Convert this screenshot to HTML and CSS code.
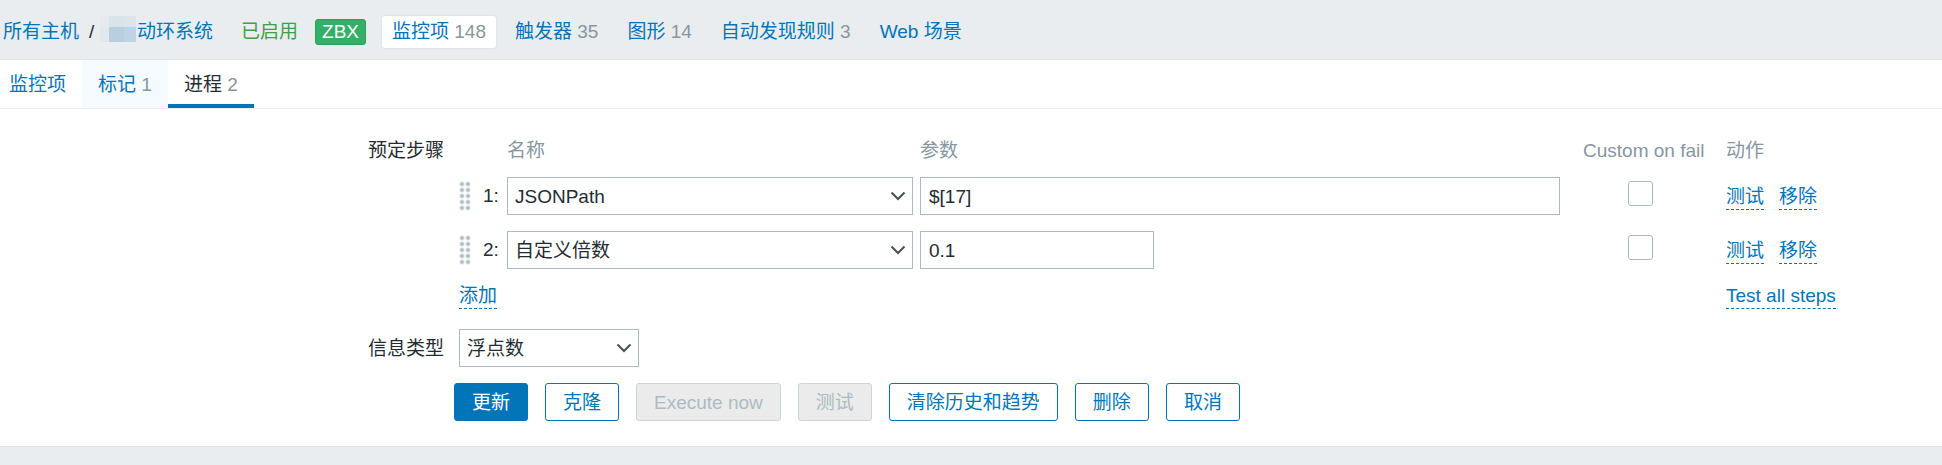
FILE: index.html
```html
<!DOCTYPE html>
<html lang="zh-CN">

<head>
    <meta charset="UTF-8">
    <meta name="viewport" content="width=device-width, initial-scale=1.0">
    <title>监控项</title>
    <link rel="stylesheet" href="styles.css">
</head>

<body>
    <nav class="host-nav">
        <div class="breadcrumbs">
            <a href="#">所有主机</a>
            <span>/</span>
            <a href="#" class="host-name">
                <svg width="37" height="26" viewBox="0 0 37 26" shape-rendering="crispEdges" aria-hidden="true">
                    <rect width="9" height="11" fill="#e6eaee" />
                    <rect x="9" width="15" height="11" fill="#d9e3ea" />
                    <rect x="24" width="12" height="11" fill="#dce5eb" />
                    <rect y="11" width="9" height="15" fill="#e1e8ed" />
                    <rect x="9" y="11" width="15" height="15" fill="#b6d0e2" />
                    <rect x="24" y="11" width="12" height="15" fill="#bed4e3" />
                </svg>动环系统</a>
        </div>
        <span class="status">已启用</span>
        <span class="badge">ZBX</span>
        <div class="host-links">
            <a href="#" class="selected">监控项 <sup>148</sup></a>
            <a href="#">触发器 <sup>35</sup></a>
            <a href="#">图形 <sup>14</sup></a>
            <a href="#">自动发现规则 <sup>3</sup></a>
            <a href="#">Web 场景</a>
        </div>
    </nav>

    <main>
        <div class="tabs">
            <a href="#">监控项</a>
            <a href="#" class="hover">标记 <sup>1</sup></a>
            <a href="#" class="active">进程 <sup>2</sup></a>
        </div>

        <form class="item-form">
            <div class="form-row">
                <div class="form-label">预定步骤</div>
                <table class="steps">
                    <colgroup>
                        <col class="col-drag">
                        <col class="col-num">
                        <col class="col-name">
                        <col class="col-params">
                        <col class="col-fail">
                        <col>
                    </colgroup>
                    <thead>
                        <tr>
                            <th></th>
                            <th></th>
                            <th>名称</th>
                            <th>参数</th>
                            <th>Custom on fail</th>
                            <th>动作</th>
                        </tr>
                    </thead>
                    <tbody>
                        <tr>
                            <td><span class="drag"></span></td>
                            <td>1:</td>
                            <td>
                                <div class="select">
                                    <select aria-label="名称">
                                        <option>JSONPath</option>
                                    </select>
                                    <svg width="16" height="10" viewBox="0 0 16 10"><path d="M1.5 1.5 8 8l6.500-6.500" /></svg>
                                </div>
                            </td>
                            <td><input type="text" class="wide" value="$[17]" aria-label="参数"></td>
                            <td class="fail"><input type="checkbox" aria-label="Custom on fail"></td>
                            <td class="actions"><button type="button" class="link">测试</button><button type="button" class="link">移除</button></td>
                        </tr>
                        <tr>
                            <td><span class="drag"></span></td>
                            <td>2:</td>
                            <td>
                                <div class="select">
                                    <select aria-label="名称">
                                        <option>自定义倍数</option>
                                    </select>
                                    <svg width="16" height="10" viewBox="0 0 16 10"><path d="M1.5 1.5 8 8l6.500-6.500" /></svg>
                                </div>
                            </td>
                            <td><input type="text" class="small" value="0.1" aria-label="参数"></td>
                            <td class="fail"><input type="checkbox" aria-label="Custom on fail"></td>
                            <td class="actions"><button type="button" class="link">测试</button><button type="button" class="link">移除</button></td>
                        </tr>
                    </tbody>
                    <tfoot>
                        <tr>
                            <td colspan="5"><button type="button" class="link">添加</button></td>
                            <td><button type="button" class="link">Test all steps</button></td>
                        </tr>
                    </tfoot>
                </table>
            </div>

            <div class="form-row">
                <label class="form-label" for="value_type">信息类型</label>
                <div class="select value-type">
                    <select id="value_type">
                        <option>浮点数</option>
                    </select>
                    <svg width="16" height="10" viewBox="0 0 16 10"><path d="M1.5 1.5 8 8l6.500-6.500" /></svg>
                </div>
            </div>

            <div class="buttons">
                <button type="submit" class="btn primary">更新</button>
                <button type="button" class="btn">克隆</button>
                <button type="button" class="btn" disabled>Execute now</button>
                <button type="button" class="btn" disabled>测试</button>
                <button type="button" class="btn">清除历史和趋势</button>
                <button type="button" class="btn">删除</button>
                <button type="button" class="btn">取消</button>
            </div>
        </form>
    </main>
</body>

</html>
```
FILE: styles.css
```css
* {
    box-sizing: border-box;
}

body {
    margin: 0;
    background: #e9edf0;
    color: #1f2c33;
    font-family: "Liberation Sans", Arial, "Noto Sans CJK SC", sans-serif;
    font-size: 19px;
    line-height: 24px;
}

a {
    color: #0275b8;
    text-decoration: none;
}

sup {
    color: #8796a1;
    font-size: inherit;
    line-height: inherit;
    vertical-align: baseline;
}

button,
input,
select {
    color: inherit;
    font: inherit;
}

/* Host navigation */
.host-nav {
    display: flex;
    align-items: center;
    height: 59px;
    padding: 4px 3px 0;
    white-space: nowrap;
}

.breadcrumbs {
    display: flex;
    align-items: center;
    gap: 10px;
}

.breadcrumbs span {
    width: 5px;
}

.host-name {
    display: flex;
    align-items: center;
    margin-left: -4px;
}

.host-name svg {
    margin-bottom: 6px;
}

.status {
    margin-left: 28px;
    color: #429e47;
}

.badge {
    margin: 0 16px 0 17px;
    padding: 0 6px;
    border: 1px solid #2f9f5e;
    border-radius: 3px;
    background: #34af67;
    color: #fff;
}

.host-links {
    display: flex;
    gap: 9px;
}

.host-links a {
    padding: 4px 10px;
    border-radius: 3px;
}

.host-links .selected {
    background: #fff;
    box-shadow: 0 0 2px #ccd5d9;
}

/* Tabs */
main {
    border-top: 1px solid #dfe4e7;
    border-bottom: 1px solid #dfe4e7;
    background: #fff;
}

.tabs {
    display: flex;
    border-bottom: 1px solid #ebeef0;
}

.tabs a {
    height: 48px;
    padding: 13px 16px 0;
}

.tabs a:first-child {
    padding-left: 9px;
}

.tabs .hover {
    background: #f5fafe;
}

.tabs .active {
    border-bottom: 4px solid #0275b8;
    color: #1f2c33;
}

/* Form */
.item-form {
    padding: 22px 0 25px;
}

.form-row {
    display: flex;
    gap: 15px;
    margin-bottom: 16px;
}

.form-label {
    flex: none;
    width: 444px;
    height: 38px;
    line-height: 40px;
    text-align: right;
}

.steps {
    flex: 1;
    border-collapse: collapse;
    table-layout: fixed;
}

.col-drag,
.col-num {
    width: 24px;
}

.col-name {
    width: 413px;
}

.col-params {
    width: 663px;
}

.col-fail {
    width: 143px;
}

.steps th,
.steps td {
    height: 54px;
    padding: 0;
    text-align: left;
    white-space: nowrap;
}

.steps th {
    height: 38px;
    padding-top: 2px;
    color: #8796a1;
    font-weight: normal;
}

.steps tfoot td {
    height: 36px;
    padding-top: 2px;
}

.drag {
    display: block;
    width: 12px;
    height: 30px;
    background: radial-gradient(circle at 3px 3px, #acbbc2 1px, transparent 3px) 0 0 / 6px 6px;
}

.select {
    position: relative;
    width: 406px;
}

.select svg {
    position: absolute;
    top: 14px;
    right: 7px;
    fill: none;
    stroke: #45525a;
    stroke-width: 2;
    pointer-events: none;
}

select,
input[type="text"] {
    display: block;
    height: 38px;
    border: 1px solid #acbbc2;
    border-radius: 0;
    background: #fff;
    padding: 2px 8px 0;
}

select {
    width: 100%;
    padding: 2px 7px 0;
    appearance: none;
}

.value-type {
    width: 180px;
}

.wide {
    width: 640px;
}

.small {
    width: 234px;
}

.steps .fail {
    padding-right: 28px;
    text-align: center;
}

input[type="checkbox"] {
    display: inline-block;
    width: 25px;
    height: 25px;
    margin: 0 0 5px;
    border: 1px solid #acbbc2;
    border-radius: 3px;
    background: #fff;
    vertical-align: middle;
    appearance: none;
}

.link {
    padding: 0;
    border: 0;
    border-bottom: 1px dashed #0275b8;
    background: none;
    color: #0275b8;
    line-height: 24px;
    cursor: pointer;
}

.steps .actions {
    padding-top: 2px;
}

.actions .link {
    margin-right: 15px;
}

.buttons {
    display: flex;
    gap: 17px;
    padding-left: 454px;
}

.btn {
    height: 38px;
    padding: 2px 17px 0;
    border: 1px solid #0275b8;
    border-radius: 3px;
    background: #fff;
    color: #0275b8;
    cursor: pointer;
}

.btn.primary {
    background: #0275b8;
    color: #fff;
}

.btn:disabled {
    border-color: #ccd5d9;
    background: #ebebeb;
    color: #acbbc2;
    cursor: default;
}
```
